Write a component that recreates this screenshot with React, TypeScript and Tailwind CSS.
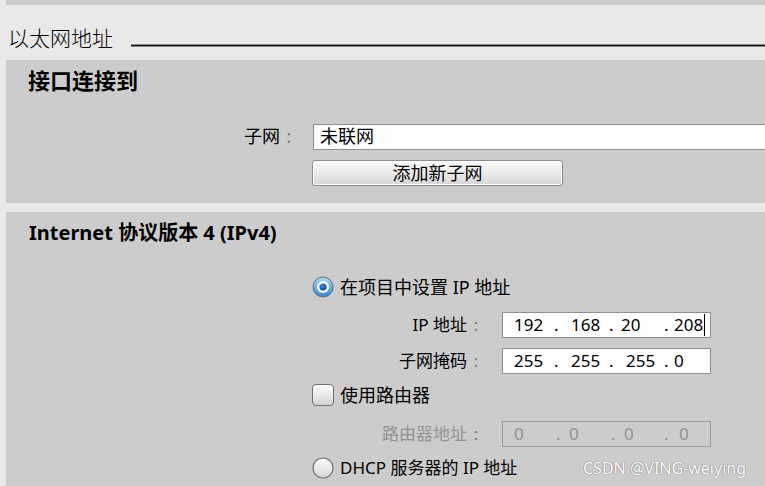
type Part = { t: string; w?: number };

const ipAddr: Part[] = [
  { t: "192", w: 40 },
  { t: ".", w: 17 },
  { t: "168", w: 38 },
  { t: ".", w: 12 },
  { t: "20", w: 43 },
  { t: ".", w: 10 },
  { t: "208" },
];

const mask: Part[] = [
  { t: "255", w: 40 },
  { t: ".", w: 17 },
  { t: "255", w: 38 },
  { t: ".", w: 17 },
  { t: "255", w: 38 },
  { t: ".", w: 10 },
  { t: "0" },
];

const router: Part[] = [
  { t: "0", w: 42 },
  { t: ".", w: 13 },
  { t: "0", w: 42 },
  { t: ".", w: 13 },
  { t: "0", w: 40 },
  { t: ".", w: 15 },
  { t: "0" },
];

function RadioOn() {
  return (
    <svg width="22" height="22" viewBox="0 0 22 22">
      <defs>
        <linearGradient id="ron" x1="0" y1="0" x2="0" y2="1">
          <stop offset="0" stopColor="#a9def5" />
          <stop offset="1" stopColor="#2f86cf" />
        </linearGradient>
        <radialGradient id="rdot" cx="0.4" cy="0.35" r="0.7">
          <stop offset="0" stopColor="#3a8ee6" />
          <stop offset="1" stopColor="#0b3f8c" />
        </radialGradient>
      </defs>
      <circle cx="11" cy="11" r="10" fill="url(#ron)" stroke="#5d6b78" strokeWidth="1" />
      <circle cx="11" cy="11" r="6" fill="#ffffff" />
      <circle cx="11" cy="11" r="3.6" fill="url(#rdot)" />
    </svg>
  );
}

function RadioOff() {
  return (
    <svg width="22" height="22" viewBox="0 0 22 22">
      <defs>
        <linearGradient id="roff" x1="0" y1="0" x2="0" y2="1">
          <stop offset="0" stopColor="#ffffff" />
          <stop offset="1" stopColor="#d4d4d4" />
        </linearGradient>
      </defs>
      <circle cx="11" cy="11" r="10" fill="url(#roff)" stroke="#6f6f6f" strokeWidth="1.2" />
    </svg>
  );
}

function IpField({ parts, disabled, cursor }: { parts: Part[]; disabled?: boolean; cursor?: boolean }) {
  return (
    <div
      className={`flex h-[26px] w-[209px] items-center pl-[11px] text-[17px] ${
        disabled ? "border border-[#9c9c9c] text-[#929292]" : "border border-[#8f8f8f] bg-white text-black"
      }`}
    >
      {parts.map((p, i) => (
        <span key={i} className="whitespace-pre" style={p.w ? { width: p.w } : undefined}>
          {p.t}
        </span>
      ))}
      {cursor && <span className="ml-px h-[22px] w-px bg-black" />}
    </div>
  );
}

function FieldRow({ label, children, disabled }: { label: string; children: React.ReactNode; disabled?: boolean }) {
  return (
    <div className="flex items-center">
      <div
        className={`flex w-[496px] justify-end pr-[17px] text-[17px] ${disabled ? "text-[#939393]" : "text-black"}`}
      >
        <span>{label}</span>
        <span className="w-[18px] text-center text-[#7a7a7a]">:</span>
      </div>
      {children}
    </div>
  );
}

export default function App() {
  return (
    <div className="relative h-[486px] w-[765px] overflow-hidden bg-[#e9e9e9] font-['Noto_Sans','Noto_Sans_CJK_SC',sans-serif] text-black">
      <div className="ml-[6px] h-[5px] bg-[#cbcbcb]" />

      <div className="flex h-[55px] items-end pb-[8px] pl-[8px]">
        <span className="text-[21px] font-light leading-[28px]">以太网地址</span>
        <div className="mb-[5px] ml-[18px] h-[3px] flex-1 border-y border-[#8a8a8a] bg-[#111]" />
      </div>

      <div className="ml-[6px] h-[143px] bg-[#cccccc]">
        <div className="pl-[22px] pt-[6px] text-[22px] font-bold leading-[28px]">接口连接到</div>
        <div className="mt-[29px] flex items-center">
          <div className="flex w-[307px] justify-end pr-[15px] text-[18px]">
            <span>子网</span>
            <span className="w-[18px] text-center text-[#7a7a7a]">:</span>
          </div>
          <div className="-mr-[10px] flex h-[26px] flex-1 items-center border border-[#8f8f8f] bg-white pl-[6px] text-[18px]">
            未联网
          </div>
        </div>
        <div className="ml-[306px] mt-[10px] flex h-[26px] w-[251px] items-center justify-center rounded-[3px] border border-[#8d8d8d] bg-gradient-to-b from-[#fafafa] via-[#ebebeb] to-[#d6d6d6] text-[18px] shadow-[inset_0_0_0_1px_#ffffff]">
          添加新子网
        </div>
      </div>

      <div className="h-[9px]" />

      <div className="ml-[6px] h-[300px] bg-[#cccccc]">
        <div className="pl-[23px] pt-[8px] text-[20px] font-bold leading-[26px]">Internet 协议版本 4 (IPv4)</div>

        <div className="ml-[306px] mt-[30px] flex h-[22px] items-center gap-[6px] text-[18px]">
          <RadioOn />
          <span>在项目中设置 IP 地址</span>
        </div>

        <div className="mt-[14px]">
          <FieldRow label="IP 地址">
            <IpField parts={ipAddr} cursor />
          </FieldRow>
        </div>
        <div className="mt-[10px]">
          <FieldRow label="子网掩码">
            <IpField parts={mask} />
          </FieldRow>
        </div>

        <div className="ml-[306px] mt-[10px] flex h-[22px] items-center gap-[6px] text-[18px]">
          <div className="h-[22px] w-[22px] rounded-[4px] border border-[#727272] bg-gradient-to-b from-[#ffffff] to-[#d2d2d2]" />
          <span>使用路由器</span>
        </div>

        <div className="mt-[15px]">
          <FieldRow label="路由器地址" disabled>
            <IpField parts={router} disabled />
          </FieldRow>
        </div>

        <div className="ml-[306px] mt-[10px] flex h-[22px] items-center gap-[6px] text-[18px]">
          <RadioOff />
          <span className="text-[17px]">DHCP 服务器的 IP 地址</span>
        </div>
      </div>

      <div className="absolute left-[583px] top-[456px] text-[16px] text-white [text-shadow:0_0_1px_#777,0_0_1px_#777]">
        CSDN @VING-weiying
      </div>
    </div>
  );
}
